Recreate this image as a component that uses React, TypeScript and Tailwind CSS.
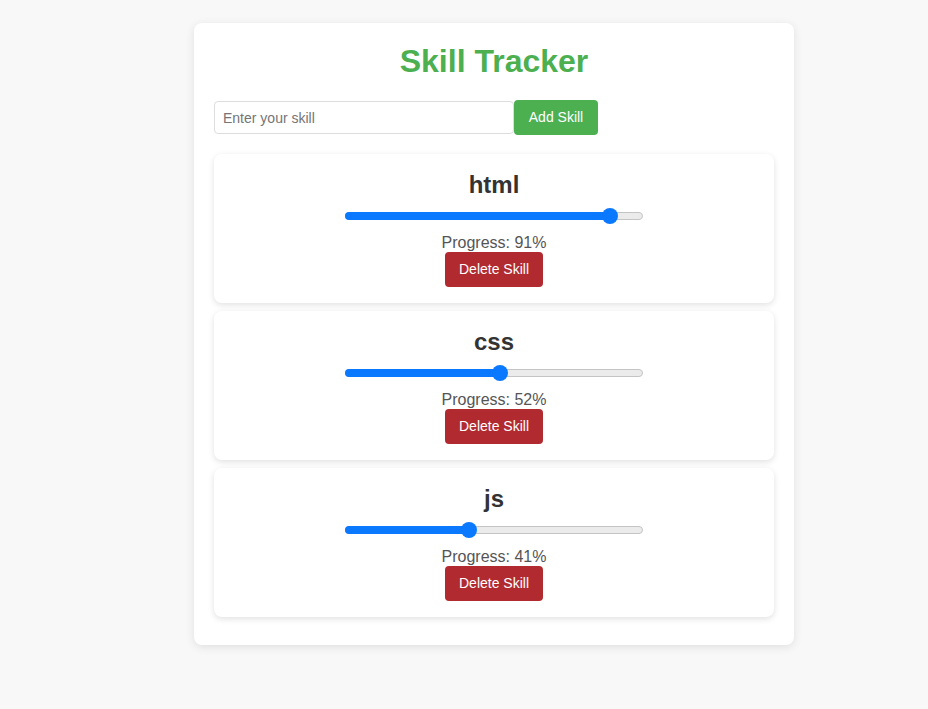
import { useState } from "react";

interface Skill {
  name: string;
  progress: number;
}

const initialSkills: Skill[] = [
  { name: "html", progress: 91 },
  { name: "css", progress: 52 },
  { name: "js", progress: 41 },
];

function ProgressSlider({ value }: { value: number }) {
  // thumb centre sits like a native range: 8px inset on both ends
  const left = `calc(8px + (100% - 16px) * ${value / 100})`;
  return (
    <div className="relative mx-auto h-4 w-[298px]">
      <div className="absolute left-0 right-0 top-1 h-2 rounded-full border border-[#c4c4c4] bg-[#ebebeb]" />
      <div
        className="absolute left-0 top-1 h-2 rounded-full bg-[#0a78ff]"
        style={{ width: left }}
      />
      <div
        className="absolute top-0 h-4 w-4 -translate-x-1/2 rounded-full bg-[#0a78ff]"
        style={{ left }}
      />
    </div>
  );
}

function SkillCard({ skill, onDelete }: { skill: Skill; onDelete: () => void }) {
  return (
    <div className="mb-2 flex flex-col items-center rounded-lg bg-white pb-4 pt-4 shadow-[0_2px_6px_rgba(0,0,0,0.12)]">
      <h2 className="text-[24px] font-bold leading-[29px] text-[#333]">{skill.name}</h2>
      <div className="mt-[9px] w-full">
        <ProgressSlider value={skill.progress} />
      </div>
      <p className="mt-[9px] text-[16px] leading-[19px] text-[#555]">
        Progress: {skill.progress}%
      </p>
      <button
        onClick={onDelete}
        className="h-[35px] w-[98px] rounded bg-[#b02a2f] text-[14px] text-white"
      >
        Delete Skill
      </button>
    </div>
  );
}

export default function App() {
  const [skills, setSkills] = useState<Skill[]>(initialSkills);
  const [text, setText] = useState("");

  const addSkill = () => {
    if (!text.trim()) return;
    setSkills([...skills, { name: text.trim(), progress: 0 }]);
    setText("");
  };

  return (
    <div className="min-h-[709px] bg-[#f8f8f8] pl-[194px] pt-[23px] font-['Liberation_Sans',Arial,sans-serif]">
      <div className="w-[600px] rounded-lg bg-white p-5 shadow-[0_2px_10px_rgba(0,0,0,0.1)]">
        <h1 className="mb-5 text-center text-[32px] font-bold leading-[37px] text-[#4caf50]">
          Skill Tracker
        </h1>
        <div className="mb-[19px] flex items-center">
          <input
            value={text}
            onChange={(e) => setText(e.target.value)}
            placeholder="Enter your skill"
            className="h-[33px] w-[300px] rounded border border-[#ddd] px-2 text-[14px] outline-none placeholder:text-[#757575]"
          />
          <button
            onClick={addSkill}
            className="h-[35px] w-[84px] rounded bg-[#4caf50] text-[14px] text-white"
          >
            Add Skill
          </button>
        </div>
        {skills.map((s, i) => (
          <SkillCard
            key={s.name + i}
            skill={s}
            onDelete={() => setSkills(skills.filter((_, j) => j !== i))}
          />
        ))}
      </div>
    </div>
  );
}
